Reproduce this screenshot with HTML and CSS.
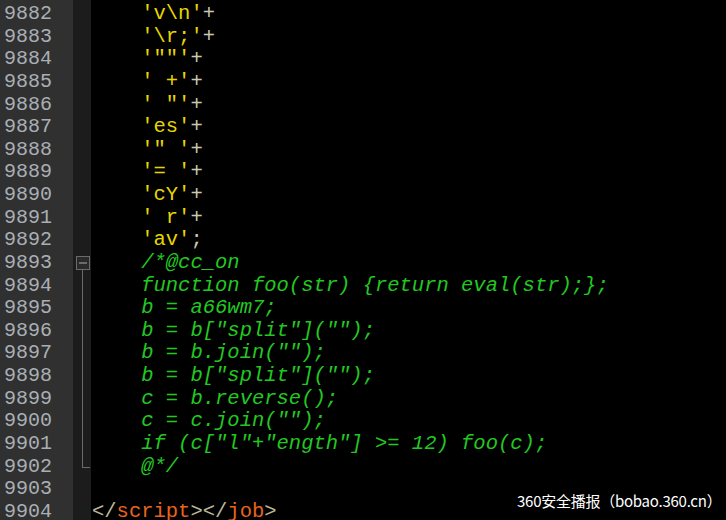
FILE: index.html
```html
<!DOCTYPE html>
<html>
<head>
<meta charset="utf-8">
<link rel="stylesheet" href="styles.css">
</head>
<body>
<div class="editor">
  <div class="row"><span class="num">9882</span><span class="fold"></span><span class="code">    <span class="s">'v\n'</span><span class="o">+</span></span></div>
  <div class="row"><span class="num">9883</span><span class="fold"></span><span class="code">    <span class="s">'\r;'</span><span class="o">+</span></span></div>
  <div class="row"><span class="num">9884</span><span class="fold"></span><span class="code">    <span class="s">'""'</span><span class="o">+</span></span></div>
  <div class="row"><span class="num">9885</span><span class="fold"></span><span class="code">    <span class="s">' +'</span><span class="o">+</span></span></div>
  <div class="row"><span class="num">9886</span><span class="fold"></span><span class="code">    <span class="s">' "'</span><span class="o">+</span></span></div>
  <div class="row"><span class="num">9887</span><span class="fold"></span><span class="code">    <span class="s">'es'</span><span class="o">+</span></span></div>
  <div class="row"><span class="num">9888</span><span class="fold"></span><span class="code">    <span class="s">'" '</span><span class="o">+</span></span></div>
  <div class="row"><span class="num">9889</span><span class="fold"></span><span class="code">    <span class="s">'= '</span><span class="o">+</span></span></div>
  <div class="row"><span class="num">9890</span><span class="fold"></span><span class="code">    <span class="s">'cY'</span><span class="o">+</span></span></div>
  <div class="row"><span class="num">9891</span><span class="fold"></span><span class="code">    <span class="s">' r'</span><span class="o">+</span></span></div>
  <div class="row"><span class="num">9892</span><span class="fold"></span><span class="code">    <span class="s">'av'</span><span class="o">;</span></span></div>
  <div class="row"><span class="num">9893</span><span class="fold"><span class="fold-box"></span></span><span class="code">    <span class="c">/*@cc_on</span></span></div>
  <div class="row"><span class="num">9894</span><span class="fold"><span class="fold-line"></span></span><span class="code">    <span class="c">function foo(str) {return eval(str);};</span></span></div>
  <div class="row"><span class="num">9895</span><span class="fold"><span class="fold-line"></span></span><span class="code">    <span class="c">b = a66wm7;</span></span></div>
  <div class="row"><span class="num">9896</span><span class="fold"><span class="fold-line"></span></span><span class="code">    <span class="c">b = b["split"]("");</span></span></div>
  <div class="row"><span class="num">9897</span><span class="fold"><span class="fold-line"></span></span><span class="code">    <span class="c">b = b.join("");</span></span></div>
  <div class="row"><span class="num">9898</span><span class="fold"><span class="fold-line"></span></span><span class="code">    <span class="c">b = b["split"]("");</span></span></div>
  <div class="row"><span class="num">9899</span><span class="fold"><span class="fold-line"></span></span><span class="code">    <span class="c">c = b.reverse();</span></span></div>
  <div class="row"><span class="num">9900</span><span class="fold"><span class="fold-line"></span></span><span class="code">    <span class="c">c = c.join("");</span></span></div>
  <div class="row"><span class="num">9901</span><span class="fold"><span class="fold-line"></span></span><span class="code">    <span class="c">if (c["l"+"ength"] &gt;= 12) foo(c);</span></span></div>
  <div class="row"><span class="num">9902</span><span class="fold"><span class="fold-end"></span></span><span class="code">    <span class="c">@*/</span></span></div>
  <div class="row"><span class="num">9903</span><span class="fold"></span><span class="code"></span></div>
  <div class="row"><span class="num">9904</span><span class="fold"></span><span class="code"><span class="b">&lt;/</span><span class="t">script</span><span class="b">&gt;&lt;/</span><span class="t">job</span><span class="b">&gt;</span></span></div>
  <div class="watermark">360安全播报（bobao.360.cn）</div>
</div>
</body>
</html>
```
FILE: styles.css
```css
html, body {
  margin: 0;
  padding: 0;
  background: #000;
}
.editor {
  position: relative;
  width: 726px;
  height: 520px;
  overflow: hidden;
  padding-top: 3px;
  box-sizing: border-box;
  background: linear-gradient(to right, #303030 0, #303030 73px, #1c1c1c 73px, #1c1c1c 91px, #000 91px);
}
.row {
  display: flex;
  height: 22.636px;
  line-height: 22.636px;
  font-family: "Liberation Mono", monospace;
  font-size: 20.5px;
}
.num {
  width: 69px;
  padding-left: 4px;
  color: #a9afb5;
  font-size: 20px;
}
.fold {
  width: 18px;
  position: relative;
}
.fold-box {
  position: absolute;
  left: 3px;
  top: 4px;
  width: 12px;
  height: 12px;
  border: 1px solid #6a6a6a;
  background: #2a2a2a;
}
.fold-box::after {
  content: "";
  position: absolute;
  left: 2px;
  right: 2px;
  top: 5px;
  height: 2px;
  background: #6a6a6a;
}
.fold-line {
  position: absolute;
  left: 9px;
  top: -5px;
  width: 1px;
  height: 28px;
  background: #6a6a6a;
}
.fold-end {
  position: absolute;
  left: 9px;
  top: -1px;
  width: 8px;
  height: 13px;
  border-left: 1px solid #6a6a6a;
  border-bottom: 1px solid #6a6a6a;
  box-sizing: border-box;
}
.code {
  flex: 1;
  white-space: pre;
  padding-left: 1px;
}
.s { color: #e6d600; }
.o { color: #c9c9b0; }
.c { color: #22c822; font-style: italic; }
.b { color: #b8b898; }
.t { color: #e8641e; }
.watermark {
  position: absolute;
  left: 517px;
  top: 491px;
  color: #fff;
  font-family: "Noto Sans CJK SC", sans-serif;
  font-size: 15px;
  line-height: 20px;
  letter-spacing: -0.25px;
}
```
